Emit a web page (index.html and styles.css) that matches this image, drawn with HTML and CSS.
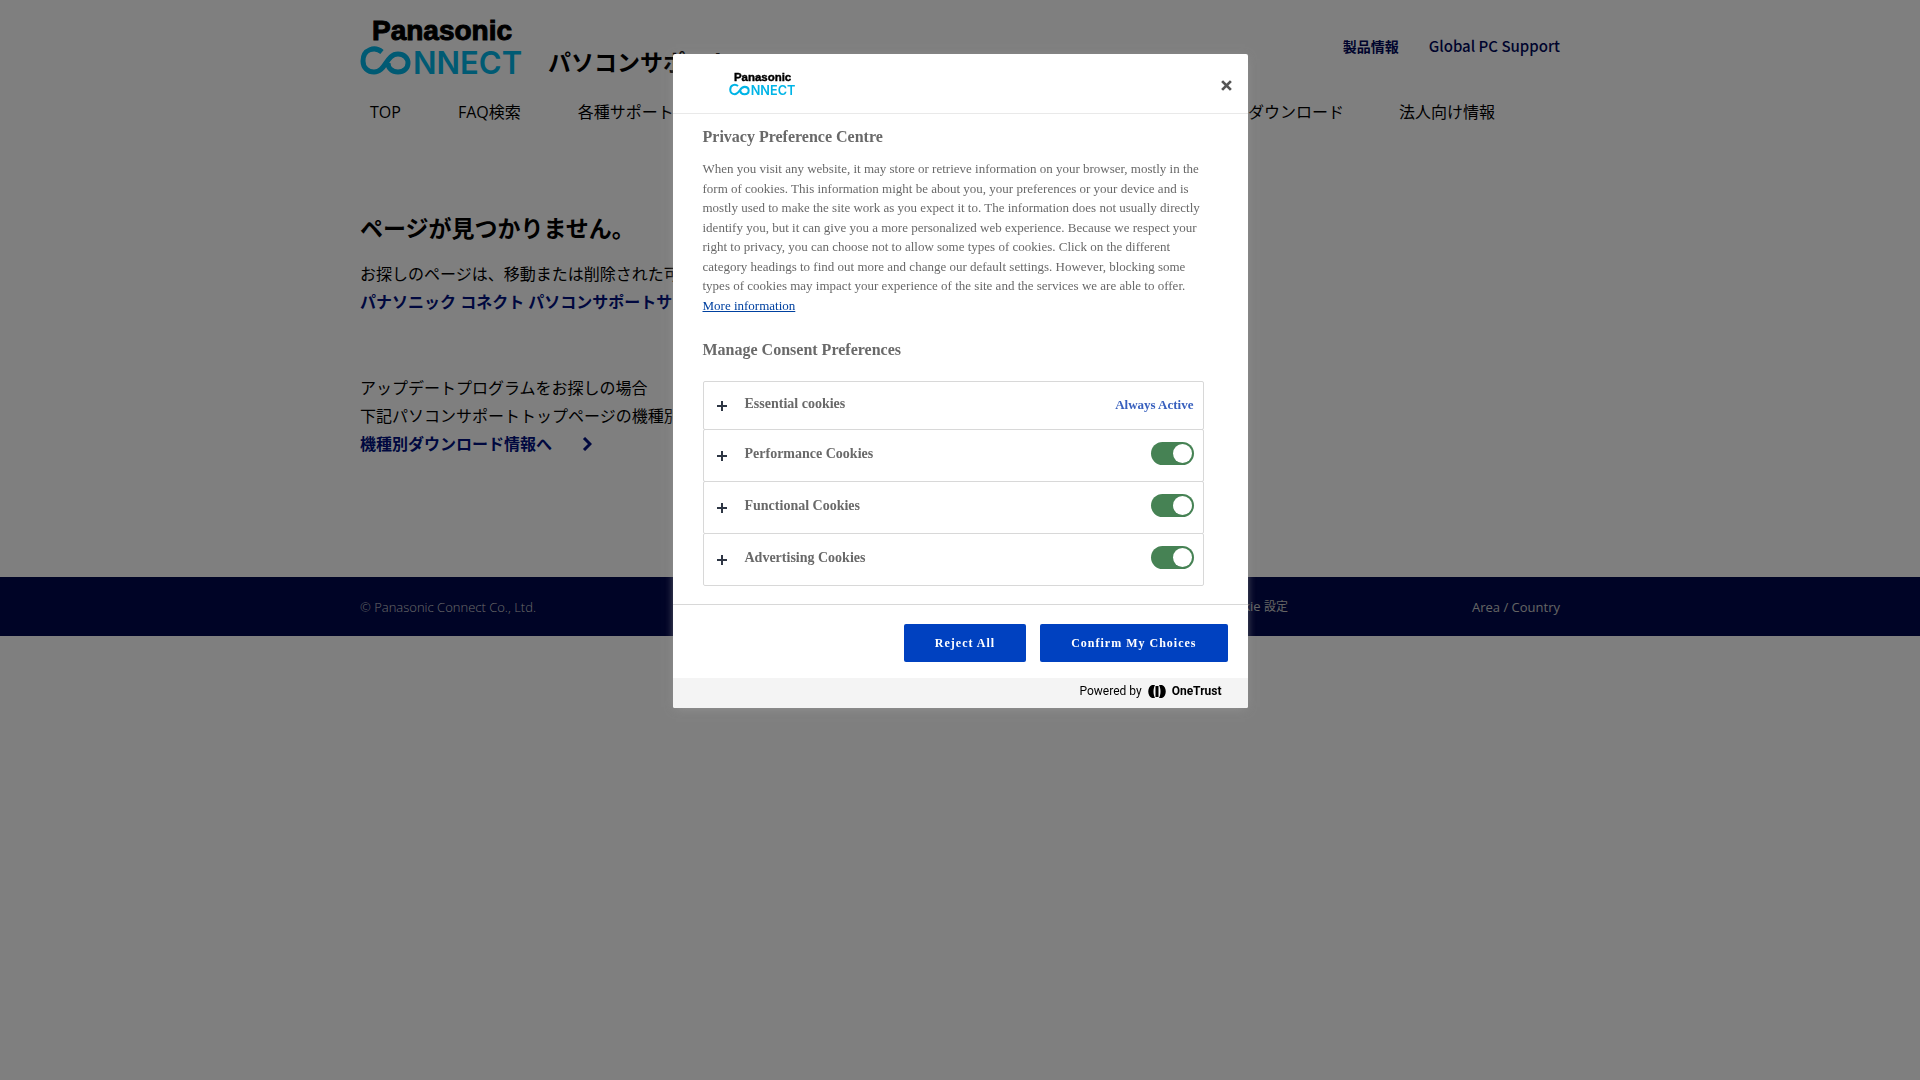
FILE: index.html
```html
<!DOCTYPE html>
<html lang="ja">
<head>
  <meta charset="UTF-8" />
  <meta name="viewport" content="width=device-width, initial-scale=1.0"/>
  <title>ページが見つかりません。 - パソコンサポート</title>
  <link rel="stylesheet" href="styles.css">
</head>
<body>
  <header class="header container">
    <div class="header-top">
      <a href="#" class="brand" aria-label="Panasonic CONNECT">
        <svg class="brand-logo" viewBox="0 0 166 58">
          <text class="logo-name" x="12" y="22" font-size="28">Panasonic</text>
          <path class="logo-loop" d="M22 34C15 28 3 31 3 43C3 50 8 54 14 54C26 54 26 36 38 36C44 36 48 40 48 45C48 50 44 54 38 54C32 54 28 50 28 45"/>
          <text class="logo-unit" x="53" y="56" font-size="31">NNECT</text>
        </svg>
      </a>
      <p class="site-title">パソコンサポート</p>
      <ul class="header-links">
        <li><a href="#" class="jp">製品情報</a></li>
        <li><a href="#">Global PC Support</a></li>
      </ul>
    </div>
    <nav class="nav">
      <ul>
        <li><a href="#">TOP</a></li>
        <li><a href="#">FAQ検索</a></li>
        <li><a href="#">各種サポート</a></li>
      </ul>
      <ul>
        <li><a href="#">ダウンロード</a></li>
        <li><a href="#">法人向け情報</a></li>
      </ul>
    </nav>
  </header>

  <main class="main container">
    <h1>ページが見つかりません。</h1>
    <p>お探しのページは、移動または削除された可</p>
    <p><a href="#">パナソニック コネクト パソコンサポートサ</a></p>
    <p class="update">アップデートプログラムをお探しの場合</p>
    <p>下記パソコンサポートトップページの機種別</p>
    <p><a href="#">機種別ダウンロード情報へ
      <svg class="arrow" viewBox="0 0 10 14"><path d="M2 1l6 6-6 6" fill="none" stroke="currentColor" stroke-width="3"/></svg></a></p>
  </main>

  <footer class="footer">
    <div class="container footer-inner">
      <small>© Panasonic Connect Co., Ltd.</small>
      <a href="#" class="cookie-link">Cookie <span>設定</span></a>
      <a href="#">Area / Country</a>
    </div>
  </footer>

  <div class="overlay"></div>

  <section class="modal" role="dialog" aria-labelledby="pcTitle" lang="en">
    <div class="modal-header">
      <svg class="modal-logo" viewBox="0 0 166 58" role="img" aria-label="Company Logo">
        <text class="logo-name" x="12" y="22" font-size="28">Panasonic</text>
        <path class="logo-loop" d="M22 34C15 28 3 31 3 43C3 50 8 54 14 54C26 54 26 36 38 36C44 36 48 40 48 45C48 50 44 54 38 54C32 54 28 50 28 45"/>
        <text class="logo-unit" x="53" y="56" font-size="31">NNECT</text>
      </svg>
      <button class="close" aria-label="Close">
        <svg viewBox="0 0 10 10"><path d="M1 1l8 8M9 1l-8 8" stroke="#565656" stroke-width="2.500"/></svg>
      </button>
    </div>

    <div class="modal-body">
      <h2 id="pcTitle">Privacy Preference Centre</h2>
      <p>When you visit any website, it may store or retrieve information on your browser, mostly in the form of cookies. This information might be about you, your preferences or your device and is mostly used to make the site work as you expect it to. The information does not usually directly identify you, but it can give you a more personalized web experience. Because we respect your right to privacy, you can choose not to allow some types of cookies. Click on the different category headings to find out more and change our default settings. However, blocking some types of cookies may impact your experience of the site and the services we are able to offer.
        <br><a href="#">More information</a></p>

      <h3>Manage Consent Preferences</h3>
      <ul class="groups">
        <li class="always">
          <button class="plus" aria-label="Essential cookies"></button>
          <span class="group-name">Essential cookies</span>
          <span class="always-active">Always Active</span>
        </li>
        <li>
          <button class="plus" aria-label="Performance Cookies"></button>
          <label class="group-name" for="performance">Performance Cookies</label>
          <input type="checkbox" id="performance" class="switch" checked>
        </li>
        <li>
          <button class="plus" aria-label="Functional Cookies"></button>
          <label class="group-name" for="functional">Functional Cookies</label>
          <input type="checkbox" id="functional" class="switch" checked>
        </li>
        <li>
          <button class="plus" aria-label="Advertising Cookies"></button>
          <label class="group-name" for="advertising">Advertising Cookies</label>
          <input type="checkbox" id="advertising" class="switch" checked>
        </li>
      </ul>
    </div>

    <div class="modal-buttons">
      <button class="btn">Reject All</button>
      <button class="btn">Confirm My Choices</button>
    </div>
    <a href="#" class="powered">
      <span>Powered by</span>
      <svg viewBox="0 0 18 13">
        <path d="M4 0h3C5 4 5 9 7 13H4C-1 11-1 2 4 0zM14 0h-3c2 4 2 9 0 13h3c5-2 5-11 0-13z"/>
        <path d="M7.500 1h3v11h-3z"/>
      </svg>
      <strong>OneTrust</strong>
    </a>
  </section>
</body>
</html>
```
FILE: styles.css
```css
* { box-sizing: border-box; }
body { margin: 0; background: #fff; color: #000; font-family: "Open Sans", "Noto Sans CJK JP", sans-serif; font-size: 16px; line-height: 28px; }
h1, h2, h3, p, ul { margin: 0; padding: 0; }
ul { list-style: none; }
a { color: #00107e; text-decoration: none; }
button { border: 0; padding: 0; cursor: pointer; }
.container { width: 100%; max-width: 1200px; margin: 0 auto; }

/* logo */
.logo-name { font-family: "Liberation Sans", sans-serif; font-weight: 700; stroke: #000; stroke-width: 1px; }
.logo-unit { font-family: Inter, sans-serif; font-weight: 600; fill: #00b4e6; }
.logo-loop { fill: none; stroke: #00b4e6; stroke-width: 5px; }

/* header */
.header-top { display: flex; align-items: flex-end; padding-top: 18px; }
.brand { display: block; height: 56px; }
.brand-logo { width: 166px; height: 58px; display: block; overflow: visible; }
.site-title { margin-left: 22px; font-size: 23px; font-weight: 700; line-height: 24px; }
.header-links { display: flex; gap: 30px; margin-left: auto; align-self: flex-start; padding-top: 14px; font: 500 15px/28px "Noto Sans CJK JP", sans-serif; }
.header-links a { color: #00085a; }
.header-links .jp { font-size: 14px; font-weight: 700; }
.nav { display: flex; justify-content: space-between; padding: 24px 65px 0 10px; }
.nav ul { display: flex; gap: 57px; }
.nav ul + ul { gap: 55px; }
.nav a { color: #000; }

/* main */
.main { padding: 86px 0 119px; }
.main h1 { font-size: 23px; line-height: 32px; margin-bottom: 16px; }
.main a { font-weight: 700; }
.main .update { margin-top: 58px; }
.arrow { width: 10px; height: 14px; margin-left: 26px; vertical-align: -1px; }

/* footer */
.footer { background: #00084c; font-size: 13px; }
.footer-inner { display: flex; align-items: center; height: 59px; }
.footer small { font-size: 13px; font-weight: 300; color: #d0d0d0; }
.footer a { color: #c8c8c8; }
.footer .cookie-link { margin-left: auto; margin-right: 184px; }
.cookie-link span { font-size: 12px; }

/* privacy dialog */
.overlay { position: fixed; inset: 0; background: rgba(0, 0, 0, 0.5); }
.modal { position: fixed; top: 5%; left: 0; right: 0; margin: 0 auto; width: 575px; max-width: 100%; background: #fff; color: #696969; border-radius: 2px; overflow: hidden; box-shadow: 0 2px 10px -3px #999; font-family: "Liberation Serif", serif; }
.modal-header { display: flex; justify-content: space-between; align-items: center; height: 60px; padding: 0 16px 0 56px; border-bottom: 1px solid #e9e9e9; }
.modal-logo { width: 68px; height: 24px; overflow: visible; }
.close { width: 11px; height: 11px; margin-top: 4px; background: none; }
.close svg { display: block; }
.modal-body { padding: 13px 44px 18px 30px; }
.modal-body h2, .modal-body h3 { font-size: 16px; line-height: 20px; }
.modal-body p { margin-top: 12px; font-size: 13px; line-height: 1.5; }
.modal-body p a { color: #0041a0; text-decoration: underline; }
.modal-body h3 { margin: 25px 0 22px; }
.groups li { display: flex; align-items: flex-start; height: 53px; padding: 12px 9px 0 13px; border: 1px solid #d8d8d8; border-radius: 2px; margin-top: -1px; }
.groups .always { height: 49px; padding-top: 10px; }
.plus { width: 10px; height: 10px; margin: 9px 18px 0 0; background: linear-gradient(#2e3644, #2e3644) center / 10px 2px no-repeat, linear-gradient(#2e3644, #2e3644) center / 2px 10px no-repeat; }
.group-name { flex: 1; font-size: 14px; font-weight: 700; line-height: 24px; }
.always-active { font-size: 13px; font-weight: 700; line-height: 26px; color: #3860be; }
.switch { appearance: none; width: 43px; height: 23px; margin: 0; padding: 2px; border-radius: 12px; background: #468254; }
.switch::before { content: ""; display: block; width: 19px; height: 19px; border-radius: 50%; background: #fff; }
.switch:checked::before { margin-left: auto; }
.modal-buttons { display: flex; justify-content: flex-end; gap: 14px; padding: 19px 20px 16px; border-top: 1px solid #d8d8d8; }
.btn { height: 38px; padding: 0 31px; border-radius: 2px; background: #0041c0; color: #fff; font: 700 12px "Liberation Serif", serif; letter-spacing: 1px; }
.powered { display: flex; justify-content: flex-end; align-items: center; gap: 6px; height: 30px; padding: 0 26px 4px 0; background: #f4f4f4; color: #000; font: 12px/20px Roboto, sans-serif; }
.powered svg { width: 18px; height: 13px; }
```
